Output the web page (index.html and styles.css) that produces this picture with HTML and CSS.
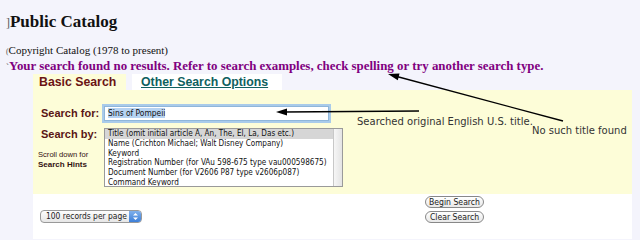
FILE: index.html
```html
<!DOCTYPE html>
<html>
<head>
<meta charset="utf-8">
<link rel="stylesheet" href="styles.css">
</head>
<body>
<div class="page">
  <h1 class="title"><span class="stray">]</span>Public Catalog</h1>
  <p class="sub"><span class="stray">(</span>Copyright Catalog (1978 to present)</p>
  <p class="msg"><span class="stray">`</span>Your search found no results. Refer to search examples, check spelling or try another search type.</p>
  <div class="tabs">
    <div class="tab tab-active">Basic Search</div>
    <div class="tab tab-other"><a href="#">Other Search Options</a></div>
  </div>
  <div class="panel">
    <div class="label">Search for:</div>
    <div class="field"><div class="input"><span class="sel">Sins of Pompeii</span></div></div>
    <div class="label label-by">Search by:
      <div class="hint">Scroll down for<br><b>Search Hints</b></div>
    </div>
    <div class="field">
      <div class="list">
        <div class="rows">
          <div class="row row-on">Title (omit initial article A, An, The, El, La, Das etc.)</div>
          <div class="row">Name (Crichton Michael; Walt Disney Company)</div>
          <div class="row">Keyword</div>
          <div class="row">Registration Number (for VAu 598-675 type vau000598675)</div>
          <div class="row">Document Number (for V2606 P87 type v2606p087)</div>
          <div class="row">Command Keyword</div>
        </div>
        <div class="scroll"></div>
      </div>
    </div>
  </div>
  <div class="bottom">
    <div class="select">100 records per page<span class="step"><svg width="7" height="9" viewBox="0 0 7 9"><path d="M1 3.5 L3.5 1 L6 3.5Z M1 5.5 L3.5 8 L6 5.5Z" fill="#fff"/></svg></span></div>
    <div class="buttons">
      <div class="btn">Begin Search</div>
      <div class="btn">Clear Search</div>
    </div>
  </div>
  <svg class="notes" width="640" height="240" viewBox="0 0 640 240">
    <line x1="419" y1="111" x2="284" y2="112" stroke="#000" stroke-width="1.3"/>
    <path d="M276 112 L287 108.5 L287 115.5Z" fill="#000"/>
    <line x1="563" y1="121" x2="395" y2="76" stroke="#000" stroke-width="1.3"/>
    <path d="M388 74 L399.5 73.6 L397.8 80.3Z" fill="#000"/>
  </svg>
  <div class="note note1">Searched original English U.S. title.</div>
  <div class="note note2">No such title found</div>
</div>
</body>
</html>
```
FILE: styles.css
```css
html, body { margin: 0; padding: 0; }
body { background: #f4f4fc; width: 640px; height: 240px; overflow: hidden; }
.page { position: relative; width: 640px; height: 240px; }
.title { margin: 0; padding: 11px 0 0 6px; font: bold 17px/22px "Liberation Serif", serif; color: #111; }
.stray { font-weight: normal; font-size: 0.7em; color: #555; }
.sub { margin: 0; padding: 9px 0 0 6px; font: 11px/14px "Liberation Serif", serif; color: #111; }
.msg { margin: 0; padding: 0 0 0 6px; font: bold 12.9px/14px "Liberation Serif", serif; color: #800080; white-space: nowrap; }
.tabs { display: flex; margin: 0 0 0 33px; height: 16px; }
.tab { font: bold 12.3px/16px "Liberation Sans", sans-serif; white-space: nowrap; }
.tab-active { background: #fdfdd8; color: #6b1414; width: 93px; padding-left: 6px; box-sizing: border-box; }
.tab-other { background: #fff; margin-left: 6px; width: 150px; padding-left: 9px; box-sizing: border-box; }
.tab-other a { color: #0f6060; text-decoration: underline; }
.panel { margin: 0 8px 0 33px; background: #fdfdd8; height: 104px; box-sizing: border-box; padding: 15px 0 0 8px; display: grid; grid-template-columns: 62px auto; grid-template-rows: 23px auto; align-content: start; }
.label { font: bold 11px/16px "Liberation Sans", sans-serif; color: #5a1616; }
.label-by { line-height: 12px; }
.hint { margin-top: 10px; font: 7.6px/9.5px "Liberation Sans", sans-serif; color: #331111; margin-left: -3px; }
.hint b { font-weight: bold; font-size: 8px; }
.input { width: 220px; height: 13px; background: #fff; border: 1px solid #8fb6da; box-shadow: 0 0 0 2px #a9cbea; margin-left: 1px; padding: 0 0 0 3px; font: 8.4px/13px "DejaVu Sans Condensed", "DejaVu Sans", sans-serif; color: #111; margin-top: 1px; }
.sel { background: #b6d3f2; }
.list { width: 239px; height: 59px; box-sizing: border-box; border: 1px solid #9a9a9a; background: #fff; display: flex; margin-left: 1px; }
.rows { flex: 1; overflow: hidden; }
.row { font: 8.1px/9.8px "DejaVu Sans Condensed", "DejaVu Sans", sans-serif; color: #111; padding-left: 3px; white-space: nowrap; }
.row-on { background: #d6d6d6; }
.scroll { width: 8px; border-left: 1px solid #c8c8c8; background: linear-gradient(to right, #f6f6f6, #e4e4e4); }
.bottom { margin: 0 8px 0 33px; background: #fff; height: 45px; display: flex; align-items: flex-start; }
.select { margin: 16px 0 0 7px; width: 102px; height: 13px; box-sizing: border-box; border: 1px solid #999; border-radius: 4px; background: linear-gradient(#fdfdfd, #e6e6e6); font: 8.4px/11px "DejaVu Sans Condensed", "DejaVu Sans", sans-serif; color: #222; padding-left: 5px; position: relative; white-space: nowrap; }
.step { position: absolute; right: 0; top: 0; bottom: 0; width: 12px; border-radius: 0 3px 3px 0; background: linear-gradient(#7fb0ec, #3d7fd8); display: flex; align-items: center; justify-content: center; }
.buttons { margin: 2px 0 0 283px; display: flex; flex-direction: column; gap: 3px; }
.btn { width: 59px; height: 12px; box-sizing: border-box; border: 1px solid #888; border-radius: 7px; background: linear-gradient(#ffffff, #e8e8e8); font: 8.6px/10px "DejaVu Sans Condensed", "DejaVu Sans", sans-serif; color: #222; text-align: center; }
.notes { position: absolute; left: 0; top: 0; pointer-events: none; }
.note { position: absolute; font: 10px/11px "DejaVu Sans", sans-serif; color: #333; white-space: nowrap; }
.note1 { left: 357px; top: 116px; }
.note2 { left: 532px; top: 125px; }
```
